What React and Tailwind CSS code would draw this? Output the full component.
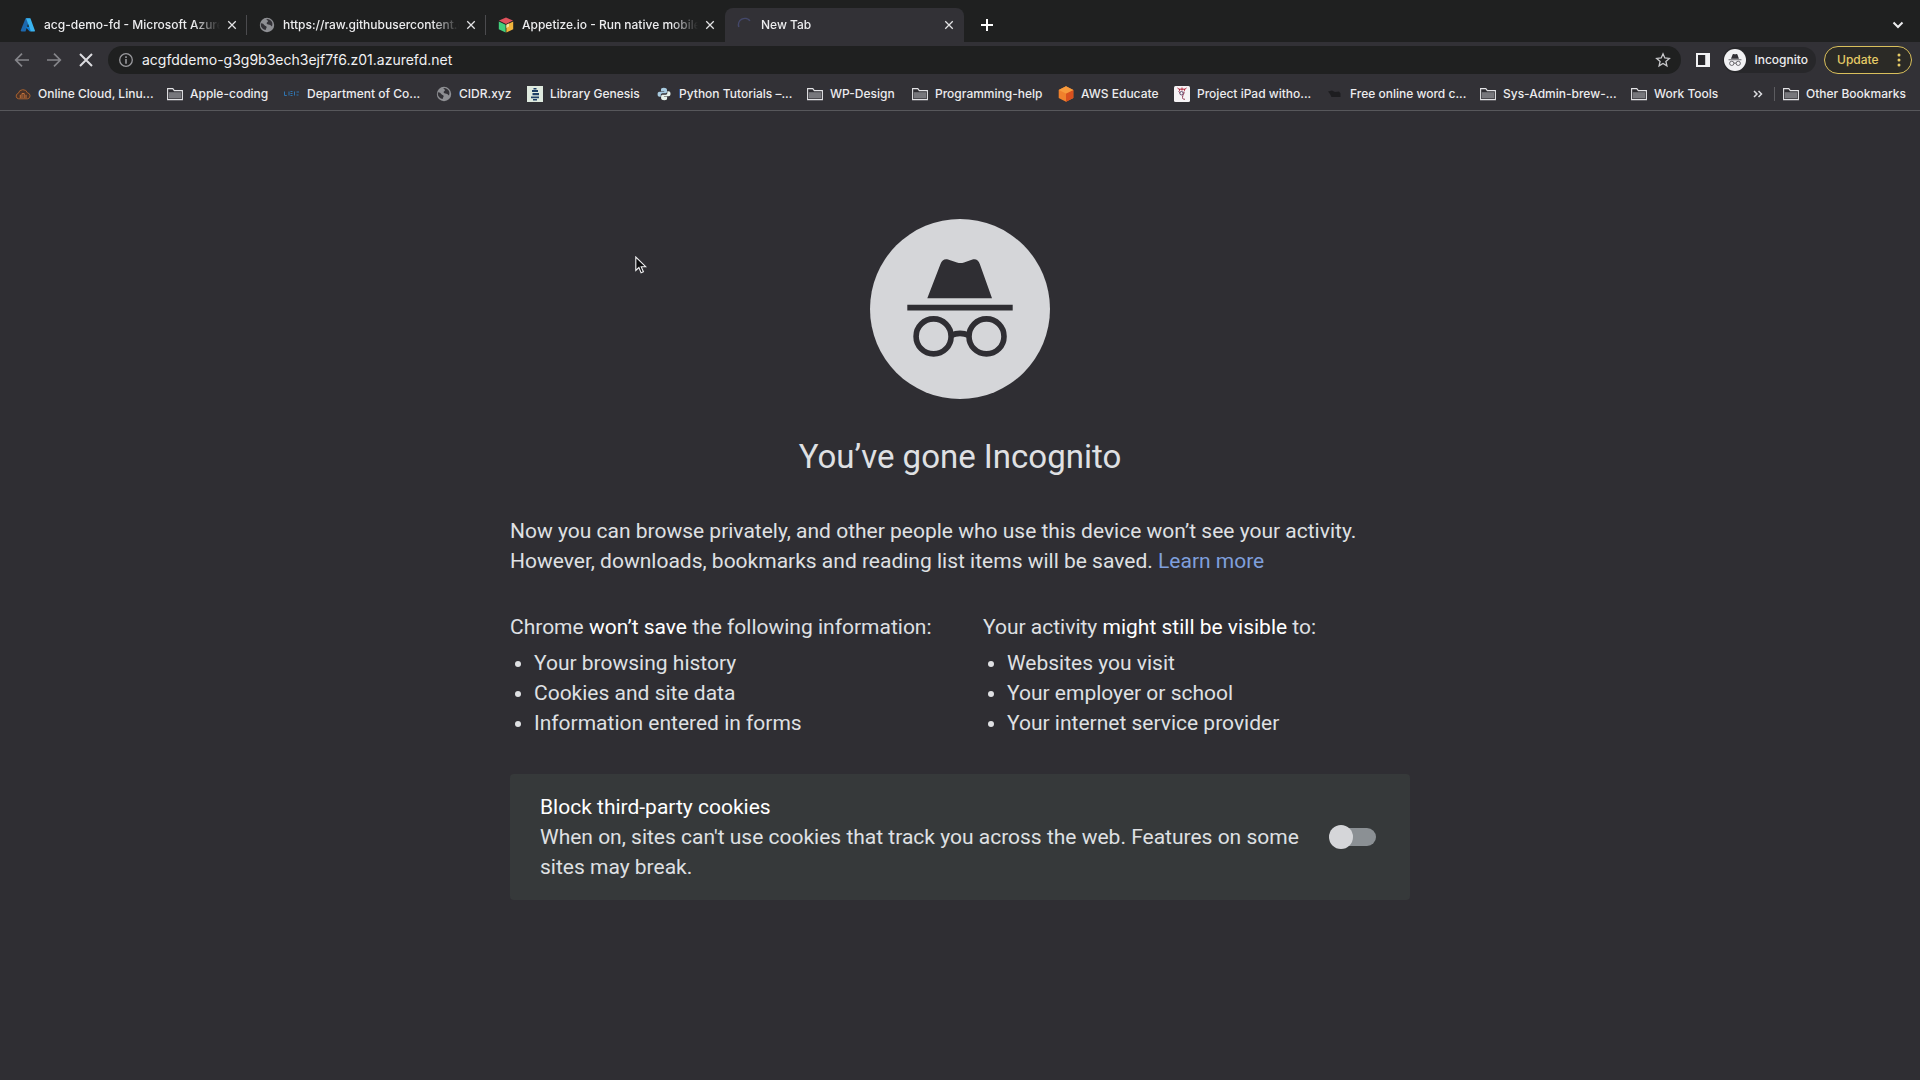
const TABS = [
  { title: "acg-demo-fd - Microsoft Azure", icon: "azure" },
  { title: "https://raw.githubusercontent.com", icon: "globe" },
  { title: "Appetize.io - Run native mobile apps", icon: "cube" },
  { title: "New Tab", icon: "spinner", active: true },
];

const BOOKMARKS = [
  { label: "Online Cloud, Linu...", icon: "cloud", width: "w-[152px]" },
  { label: "Apple-coding", icon: "folder", width: "w-[117px]" },
  { label: "Department of Co...", icon: "dept", width: "w-[152px]" },
  { label: "CIDR.xyz", icon: "globe", width: "w-[91px]" },
  { label: "Library Genesis", icon: "libgen", width: "w-[129px]" },
  { label: "Python Tutorials –...", icon: "python", width: "w-[151px]" },
  { label: "WP-Design", icon: "folder", width: "w-[105px]" },
  { label: "Programming-help", icon: "folder", width: "w-[146px]" },
  { label: "AWS Educate", icon: "aws", width: "w-[116px]" },
  { label: "Project iPad witho...", icon: "ipad", width: "w-[153px]" },
  { label: "Free online word c...", icon: "word", width: "w-[153px]" },
  { label: "Sys-Admin-brew-...", icon: "folder", width: "w-[151px]" },
  { label: "Work Tools", icon: "folder", width: "w-[110px]" },
];

function Glyph({ name }) {
  const common = { viewBox: "0 0 16 16", className: "size-4 shrink-0", "aria-hidden": true };
  switch (name) {
    case "azure":
      return (
        <svg {...common}>
          <path d="M5.6 1.2h4.3L5.5 14.4H1.6c-.6 0-1-.6-.8-1.2z" fill="#1d68ad" />
          <path d="M5.2 9.8h6.2l1 3.8-2.6 1z" fill="#0f7bd0" />
          <path d="M6 1.2h4.4l4.5 12.2c.2.6-.2 1.2-.8 1.2H9.9c.5 0 .9-.6.7-1.2z" fill="#3ab4f0" />
        </svg>
      );
    case "globe":
      return (
        <svg {...common}>
          <circle cx="8" cy="8" r="7.2" fill="#8e8f93" />
          <path d="M2.2 6.2c1.6.2 2.6.8 3 1.8.6 1.2 2.2.6 2.4 2 .2 1.2-.8 1.4-.9 3.1-2.700-.6-4.900-2.700-4.900-5.200 0-.6.1-1.200.4-1.700z" fill="#333237" />
          <path d="M7.300 2.100c2.700-.2 4.900 1.200 5.900 3.500.3 1.200.3 2.600-.2 3.800-1-.1-1.200-1.500-2.600-1.600-1.600-.1-2.800-.500-2.800-1.700 0-.9 1.200-.8 1.300-1.700.1-.8-.9-1.300-1.600-2.300z" fill="#333237" />
        </svg>
      );
    case "cube":
      return (
        <svg {...common}>
          <path d="M8 .6 15 3.600 8 7 1 3.600z" fill="#e0525c" />
          <path d="M.8 4.400 7.600 7.700v7.900L.8 12.200z" fill="#43cf7c" />
          <path d="M15.200 4.400 8.400 7.700v7.900l6.800-3.400z" fill="#f1b43c" />
          <path d="M8.400 7.700 11 6.400v3.200l-2.600 1.400z" fill="#fbe3a0" />
        </svg>
      );
    case "spinner":
      return (
        <svg {...common}>
          <path d="M1.800 10A6.500 6.500 0 0 1 13 3.800" fill="none" stroke="#44486a" strokeWidth="1.500" />
        </svg>
      );
    case "cloud":
      return (
        <svg {...common}>
          <path d="M3.600 12.800a2.800 2.800 0 0 1-.3-5.500 4.800 4.800 0 0 1 9.200-.4 3 3 0 0 1 .2 5.900z" fill="#4a3227" stroke="#a8622f" strokeWidth="1" />
          <path d="M5.300 12V8.800M7 12V7.500h2.200V12M11 12V8.800" fill="none" stroke="#c4723a" strokeWidth="1" />
        </svg>
      );
    case "folder":
      return (
        <svg {...common}>
          <path d="M.6 2.600h5.200l1.500 2h8.100v9H.6z" fill="#2f2e33" stroke="#e3e3e6" strokeWidth="1.100" />
          <path d="M1.800 6.200h12.400v6.200H1.800z" fill="#77777c" />
        </svg>
      );
    case "dept":
      return (
        <svg {...common}>
          <path d="M.5 5.500v4h2.300M5 5.500v4M6.500 5.500h2M6.500 7.500h2M6.500 9.500h2M10.500 5.500v4M12.500 6h2.500M12.500 9h2" fill="none" stroke="#2f74b0" strokeWidth="1" />
        </svg>
      );
    case "libgen":
      return (
        <svg {...common}>
          <path d="M0 0h16v16H0z" fill="#dfeadf" />
          <path d="M6.500 2h3v1.500h-3zM5 4h6v2H5zM5.500 7h6.500v2.200H5.500zM4 10.500h8v1.800H4zM6 13h4v1.500H6z" fill="#1f3f66" />
        </svg>
      );
    case "python":
      return (
        <svg {...common}>
          <path d="M7.800 1.800c-2.300 0-2.800.9-2.800 2v1.400h3.200v.6H3.600C2 5.800 1.600 7 1.600 8.200s.4 2.600 2 2.600h1.200V9c0-1 .8-1.800 1.800-1.800h3c.8 0 1.400-.7 1.400-1.500V3.800c0-1.300-1.300-2-3.200-2z" fill="#a8cbe0" />
          <path d="M8.300 14.200c2.300 0 2.800-.9 2.800-2v-1.400H7.900v-.6h4.600c1.600 0 2-1.200 2-2.400s-.4-2.600-2-2.600h-1.200V7c0 1-.8 1.800-1.800 1.800h-3c-.8 0-1.400.7-1.400 1.500v1.900c0 1.300 1.300 2 3.200 2z" fill="#e8f1ea" />
        </svg>
      );
    case "aws":
      return (
        <svg {...common}>
          <path d="M8 .3 15.300 4v8L8 15.700.7 12V4z" fill="#f0802c" />
          <path d="M8 7.500 15.300 4v8L8 15.700z" fill="#d9501e" />
          <path d="M8 .3 15.300 4 8 7.500.7 4z" fill="#f79a3c" />
        </svg>
      );
    case "ipad":
      return (
        <svg {...common}>
          <rect width="16" height="16" rx="1.500" fill="#f6f3f5" />
          <path d="M3.500 2l1.500 1.200h6L12.500 2M5.500 3v1.800M8 1.500v3M10.500 3v1.800" fill="none" stroke="#b3263c" strokeWidth="1" />
          <circle cx="7.500" cy="7.200" r="1.700" fill="none" stroke="#57456b" strokeWidth="1" />
          <path d="M4.500 5.500 6 6.500M10 5.500c.5 2.500-1.500 3-1.500 6 0 1.500 1.200 2 2.500 1.700" fill="none" stroke="#8b3450" strokeWidth="1" />
        </svg>
      );
    default:
      return (
        <svg {...common}>
          <path d="M1 5.500l4-1 3 1.500 4-.5 1.500 2v3.500H4.500L3 8z" fill="#1d1d20" />
        </svg>
      );
  }
}

function CrossIcon({ className }) {
  return (
    <svg viewBox="0 0 16 16" className={className} aria-hidden="true">
      <path d="M2 2l12 12M14 2 2 14" fill="none" stroke="currentColor" strokeWidth="2" />
    </svg>
  );
}

function ArrowIcon({ flip }) {
  return (
    <svg viewBox="0 0 16 16" className={flip ? "size-4 -scale-x-100" : "size-4"} aria-hidden="true">
      <path d="M15 8H2M8 1.700 1.700 8 8 14.300" fill="none" stroke="currentColor" strokeWidth="1.700" />
    </svg>
  );
}

function IncognitoFigure() {
  return (
    <>
      <path d="M57.300 79.300 70.500 45c1.300-3.800 4-5.400 7.500-4.500l9 2.900c2.500.8 4.500.8 7 0l8.500-2.900c3.500-.9 6 .7 7.300 4.500L122 79.300z" fill="currentColor" />
      <path d="M37.300 85.700h105.400v5.700H37.300z" fill="currentColor" />
      <g fill="none" stroke="currentColor" strokeWidth="5.600">
        <circle cx="63.600" cy="117.400" r="17.500" />
        <circle cx="116.500" cy="117.400" r="17.500" />
        <path d="M81 116.500c6-2.800 12-2.800 18 0" />
      </g>
    </>
  );
}

function Tab({ title, icon, active, divider }) {
  return (
    <div
      role="tab"
      aria-selected={!!active}
      className={
        active
          ? "flex w-[239px] items-center rounded-t-lg bg-[#323136] pr-2 pl-3"
          : "flex w-[239px] items-center pr-2 pl-3"
      }
    >
      <Glyph name={icon} />
      <span className="ml-2 w-44 shrink-0 overflow-hidden mask-r-from-85% text-xs font-medium whitespace-nowrap text-[#ececee]">
        {title}
      </span>
      <button type="button" aria-label={"Close " + title} className="ml-1 flex size-4 shrink-0 items-center justify-center text-[#e4e4e6]">
        <CrossIcon className="size-[10px]" />
      </button>
      {divider && <span className="ml-auto -mr-2 h-5 w-px bg-[#4b4b4e]" />}
    </div>
  );
}

function TabStrip() {
  return (
    <header className="flex h-[42px] items-stretch bg-[#1f2020] pt-2 pr-3.5 pl-2">
      <div role="tablist" className="flex">
        {TABS.map((tab, i) => (
          <Tab key={tab.title} {...tab} divider={i < 2} />
        ))}
      </div>
      <button type="button" aria-label="New tab" className="ml-[11px] flex w-6 items-center justify-center text-white">
        <svg viewBox="0 0 16 16" className="size-4" aria-hidden="true">
          <path d="M8 2v12M2 8h12" fill="none" stroke="currentColor" strokeWidth="2" />
        </svg>
      </button>
      <button type="button" aria-label="Search tabs" className="ml-auto flex items-center text-[#ececee]">
        <svg viewBox="0 0 16 16" className="size-4" aria-hidden="true">
          <path d="M3.500 5.500 8 10l4.500-4.500" fill="none" stroke="currentColor" strokeWidth="2" />
        </svg>
      </button>
    </header>
  );
}

function Toolbar() {
  return (
    <div className="flex h-9 items-center bg-[#323136] pr-2 pl-3.5">
      <button type="button" aria-label="Back" className="text-[#85858a]">
        <ArrowIcon />
      </button>
      <button type="button" aria-label="Forward" className="ml-4 text-[#85858a]">
        <ArrowIcon flip />
      </button>
      <button type="button" aria-label="Stop loading" className="ml-4 text-[#dcdce0]">
        <CrossIcon className="size-4" />
      </button>
      <div className="ml-3.5 flex h-7 flex-1 items-center rounded-full bg-[#1f2020] pr-2.5 pl-2.5">
        <svg viewBox="0 0 16 16" className="size-4 text-[#9a9a9e]" aria-hidden="true">
          <circle cx="8" cy="8" r="6.300" fill="none" stroke="currentColor" strokeWidth="1.300" />
          <path d="M7.200 4.300h1.600v1.600H7.200zM7.200 7h1.600v4.800H7.200z" fill="currentColor" />
        </svg>
        <input
          type="text"
          aria-label="Address"
          defaultValue="acgfddemo-g3g9b3ech3ejf7f6.z01.azurefd.net"
          className="ml-2 flex-1 bg-transparent text-sm text-[#f1f1f3] outline-none"
        />
        <button type="button" aria-label="Bookmark this tab" className="text-[#c9c9cc]">
          <svg viewBox="0 0 16 16" className="size-4" aria-hidden="true">
            <path d="m8 1.800 1.800 4.200 4.500.4-3.400 3 1 4.400L8 11.500l-3.900 2.300 1-4.400-3.400-3 4.500-.4z" fill="none" stroke="currentColor" strokeWidth="1.300" />
          </svg>
        </button>
      </div>
      <button type="button" aria-label="Side panel" className="ml-3.5 text-[#f1f1f3]">
        <svg viewBox="0 0 16 16" className="size-4" aria-hidden="true">
          <path d="M1 1h14v14H1z" fill="currentColor" />
          <path d="M3 3h7.200v10H3z" fill="#27262a" />
        </svg>
      </button>
      <button type="button" className="ml-3 flex h-[26px] items-center gap-2 rounded-full bg-[#27272a] pr-2 pl-px text-xs font-medium text-[#ececee]">
        <svg viewBox="0 0 180 180" className="size-[22px] text-[#323136]" aria-hidden="true">
          <circle cx="90" cy="90" r="90" fill="#f1f1f3" />
          <IncognitoFigure />
        </svg>
        Incognito
      </button>
      <button type="button" className="ml-2 flex h-7 w-[88px] items-center justify-between rounded-full border border-[#d9bf5c] bg-[#2b2a26] pr-2 pl-3 text-xs font-medium text-[#e6cb66]">
        Update
        <svg viewBox="0 0 8 16" className="h-4 w-2" aria-hidden="true">
          <g fill="currentColor">
            <circle cx="4" cy="3" r="1.500" />
            <circle cx="4" cy="8" r="1.500" />
            <circle cx="4" cy="13" r="1.500" />
          </g>
        </svg>
      </button>
    </div>
  );
}

function BookmarksBar() {
  return (
    <nav aria-label="Bookmarks" className="flex h-[33px] items-center border-b border-[#57575b] bg-[#323136] pr-3.5 pl-[15px] text-xs font-medium text-[#ececee]">
      {BOOKMARKS.map(({ label, icon, width }) => (
        <a key={label} href="#" className={"flex shrink-0 items-center gap-[7px] whitespace-nowrap " + width}>
          <Glyph name={icon} />
          {label}
        </a>
      ))}
      <button type="button" aria-label="More bookmarks" className="ml-auto text-[#dcdce0]">
        <svg viewBox="0 0 16 16" className="size-4" aria-hidden="true">
          <path d="m4 5 3 3-3 3M8.500 5l3 3-3 3" fill="none" stroke="currentColor" strokeWidth="1.500" />
        </svg>
      </button>
      <span className="mx-2 h-3.5 w-px bg-[#5c5c60]" />
      <a href="#" className="flex items-center gap-[7px] whitespace-nowrap">
        <Glyph name="folder" />
        Other Bookmarks
      </a>
    </nav>
  );
}

function InfoList({ before, strong, after, items, className }) {
  return (
    <section className={className}>
      <p>
        {before} <span className="text-white">{strong}</span> {after}
      </p>
      <ul className="mt-1.5 list-disc pl-6">
        {items.map((item) => (
          <li key={item}>{item}</li>
        ))}
      </ul>
    </section>
  );
}

export default function App() {
  return (
    <div className="relative flex min-h-screen flex-col bg-[#2f2e33] font-[Inter,sans-serif]">
      <TabStrip />
      <Toolbar />
      <BookmarksBar />
      <main className="mx-auto w-full max-w-[900px] pt-[108px] font-[Roboto,sans-serif] text-[21px] leading-[30px] text-[#dfe0e3]">
        <svg viewBox="0 0 180 180" className="mx-auto size-[180px] text-[#2f2e33]" role="img" aria-label="Incognito">
          <circle cx="90" cy="90" r="90" fill="#d5d6d9" />
          <IncognitoFigure />
        </svg>
        <h1 className="mt-10 text-center text-[33px] leading-9">You’ve gone Incognito</h1>
        <p className="mt-[41px]">
          Now you can browse privately, and other people who use this device won’t see your activity. However,
          downloads, bookmarks and reading list items will be saved.{" "}
          <a href="#" className="inline-block text-[#7f9fdc]">
            Learn more
          </a>
        </p>
        <div className="mt-9 flex">
          <InfoList
            className="w-[473px]"
            before="Chrome"
            strong="won’t save"
            after="the following information:"
            items={["Your browsing history", "Cookies and site data", "Information entered in forms"]}
          />
          <InfoList
            className="flex-1"
            before="Your activity"
            strong="might still be visible"
            after="to:"
            items={["Websites you visit", "Your employer or school", "Your internet service provider"]}
          />
        </div>
        <div className="mt-9 flex items-center justify-between rounded bg-[#36393a] py-[18px] pr-[34px] pl-[30px]">
          <label htmlFor="block-cookies" className="w-[770px]">
            <span className="block text-white">Block third-party cookies</span>
            When on, sites can't use cookies that track you across the web. Features on some sites may break.
          </label>
          <input
            id="block-cookies"
            type="checkbox"
            role="switch"
            className="grid w-[47px] appearance-none items-center before:col-start-1 before:row-start-1 before:ml-2 before:h-[18px] before:rounded-full before:bg-[#8b9094] before:content-[''] after:col-start-1 after:row-start-1 after:size-6 after:rounded-full after:bg-[#d5d6d9] after:content-['']"
          />
        </div>
      </main>
      <svg viewBox="0 0 12 18" className="absolute top-[256px] left-[635px] h-[18px] w-3" aria-hidden="true">
        <path d="M.8 1v13.500l3.100-3 2.200 5.200 2.300-1-2.200-5h4.500z" fill="#0c0c0e" stroke="#f1f1f3" strokeWidth="1.100" />
      </svg>
    </div>
  );
}
